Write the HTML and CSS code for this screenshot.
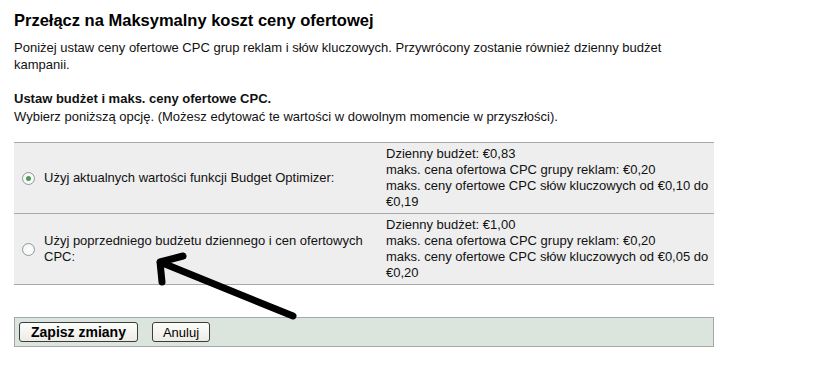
FILE: index.html
```html
<!DOCTYPE html>
<html lang="pl">
<head>
    <meta charset="UTF-8">
    <title>Przełącz na Maksymalny koszt ceny ofertowej</title>
    <link rel="stylesheet" href="styles.css">
</head>
<body>
    <div class="page">
        <h1 class="title">Przełącz na Maksymalny koszt ceny ofertowej</h1>

        <p class="intro">Poniżej ustaw ceny ofertowe CPC grup reklam i słów kluczowych. Przywrócony zostanie również dzienny budżet kampanii.</p>

        <p class="hint"><b>Ustaw budżet i maks. ceny ofertowe CPC.</b><br>Wybierz poniższą opcję. (Możesz edytować te wartości w dowolnym momencie w przyszłości).</p>

        <div class="options">
            <label class="option">
                <span class="choice">
                    <input type="radio" name="bidMode" class="radio" checked>
                    <span>Użyj aktualnych wartości funkcji Budget Optimizer:</span>
                </span>
                <span class="values">
                    Dzienny budżet: €0,83<br>
                    maks. cena ofertowa CPC grupy reklam: €0,20<br>
                    maks. ceny ofertowe CPC słów kluczowych od €0,10 do €0,19
                </span>
            </label>
            <label class="option">
                <span class="choice">
                    <input type="radio" name="bidMode" class="radio">
                    <span>Użyj poprzedniego budżetu dziennego i cen ofertowych CPC:</span>
                </span>
                <span class="values">
                    Dzienny budżet: €1,00<br>
                    maks. cena ofertowa CPC grupy reklam: €0,20<br>
                    maks. ceny ofertowe CPC słów kluczowych od €0,05 do €0,20
                </span>
            </label>
        </div>

        <div class="actions">
            <button type="button" class="btn btn-save">Zapisz zmiany</button>
            <button type="button" class="btn">Anuluj</button>
        </div>

        <!-- hand-drawn arrow over the page -->
        <svg class="arrow" width="829" height="376" viewBox="0 0 829 376">
            <path d="M293 316 L160 262 M183 256 L160 262 L162 282" fill="none" stroke="#000" stroke-width="7" stroke-linecap="round" stroke-linejoin="round"/>
        </svg>
    </div>
</body>
</html>
```

FILE: styles.css
```css
body {
    margin: 0;
    font-family: "Liberation Sans", Arial, sans-serif;
    font-size: 13px;
    color: #111;
    background: #fff;
}
.page {
    position: relative;
    width: 700px;
    padding: 10px 14px 0;
}
.title {
    margin: 0;
    font-size: 16.5px;
    line-height: 21px;
    font-weight: bold;
    color: #000;
}
.intro {
    margin: 8px 0 0;
    line-height: 17px;
}
.hint {
    margin: 17px 0 0;
    line-height: 18px;
}
.options {
    margin-top: 16px;
    border-top: 1px solid #a9a9a9;
}
.option {
    display: grid;
    grid-template-columns: 372px 1fr;
    background: #eeeeee;
    border-bottom: 1px solid #a9a9a9;
}
.choice {
    display: flex;
    align-items: center;
    gap: 9px;
    padding: 0 10px 0 8px;
    line-height: 16px;
}
.values {
    padding: 3px 2px 3px 0;
    line-height: 16px;
}
.radio {
    appearance: none;
    flex: none;
    width: 13px;
    height: 13px;
    margin: 0;
    border: 1px solid #8f9aa3;
    border-radius: 50%;
    background: radial-gradient(circle at 60% 60%, #ffffff 0, #f0f0ec 100%);
    display: grid;
    place-items: center;
}
.radio:checked::after {
    content: "";
    width: 5px;
    height: 5px;
    border-radius: 50%;
    background: #4a9a5c;
}
.actions {
    margin-top: 32px;
    display: flex;
    gap: 14px;
    padding: 4px;
    background: #dce5dd;
    border: 1px solid #a4a8a5;
}
.btn {
    height: 20px;
    padding: 0 10px;
    font-family: "Liberation Sans", Arial, sans-serif;
    font-size: 13px;
    color: #000;
    background: linear-gradient(#fdfdfb, #ecebe6);
    border: 1px solid #3c3c3c;
    border-radius: 3px;
}
.btn-save {
    padding: 0 11px;
    font-size: 14px;
    font-weight: bold;
}
.arrow {
    position: absolute;
    top: 0;
    left: 0;
    pointer-events: none;
}
```
